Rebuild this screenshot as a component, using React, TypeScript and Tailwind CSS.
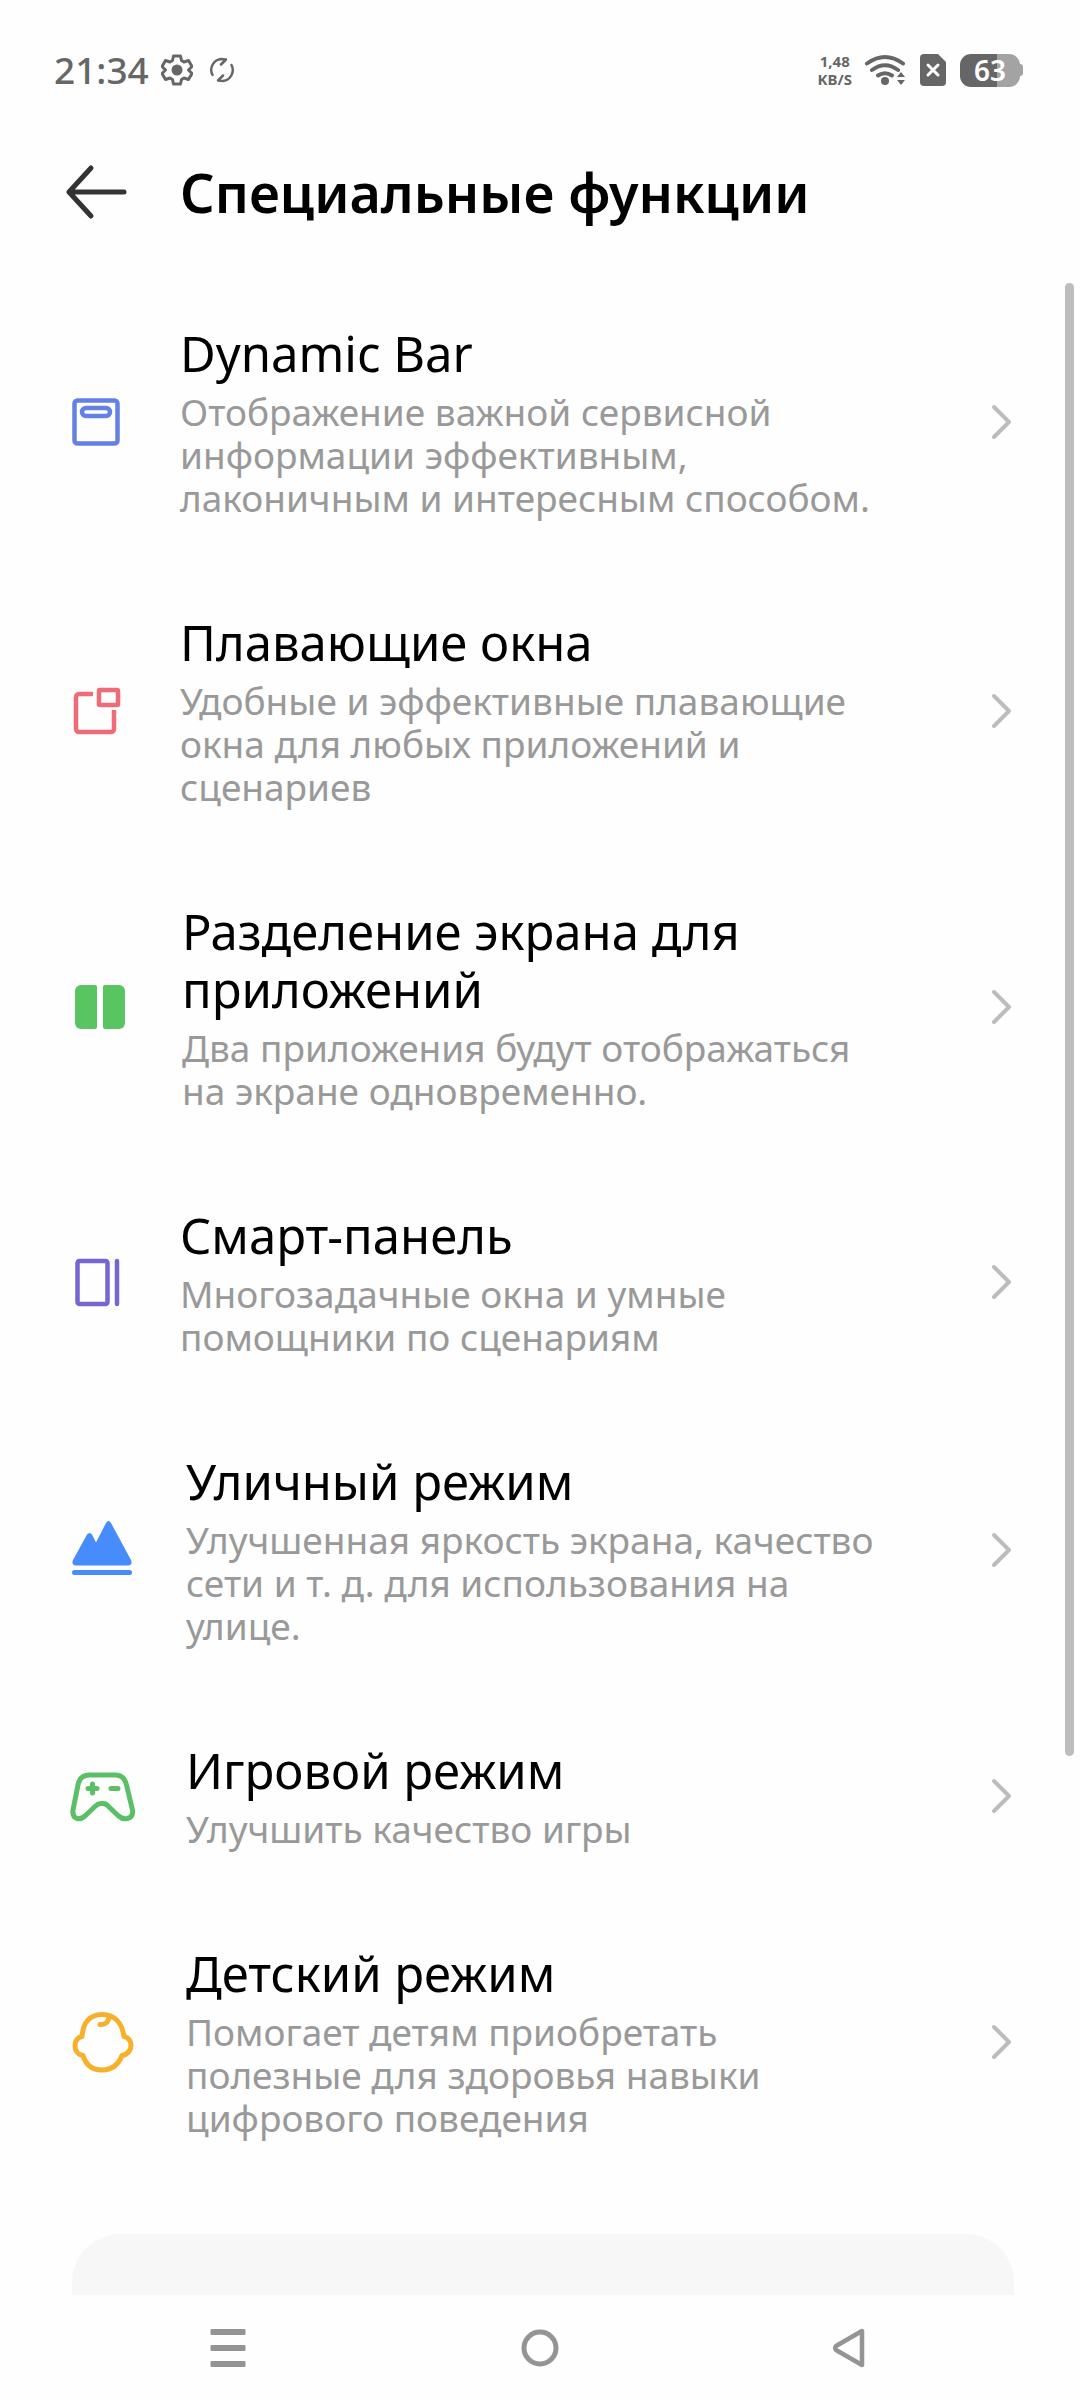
import React from 'react';
import { clsx } from 'clsx';

interface Feature {
  id: string;
  title: string;
  description: string;
  icon: React.ReactNode;
  iconBox: string;
}

const features: Feature[] = [
  {
    id: 'dynamic-bar',
    title: 'Dynamic Bar',
    description: 'Отображение важной сервисной информации эффективным, лаконичным и интересным способом.',
    iconBox: 'w-[114px]',
    icon: (
      <g fill="none" stroke="#6480e6" strokeWidth="4.5">
        <rect x="8.5" y="14.5" width="43" height="43" rx="3" />
        <rect x="16" y="22" width="28" height="8" rx="4" />
      </g>
    ),
  },
  {
    id: 'floating-windows',
    title: 'Плавающие окна',
    description: 'Удобные и эффективные плавающие окна для любых приложений и сценариев',
    iconBox: 'w-[114px]',
    icon: (
      <g fill="none" stroke="#f06b78" strokeWidth="4.5">
        <path d="M27 19H13a3 3 0 0 0-3 3v32a3 3 0 0 0 3 3h32a3 3 0 0 0 3-3V35" />
        <rect x="33" y="15" width="19" height="15" rx="1" />
      </g>
    ),
  },
  {
    id: 'split-screen',
    title: 'Разделение экрана для приложений',
    description: 'Два приложения будут отображаться на экране одновременно.',
    iconBox: 'w-[116px]',
    icon: (
      <g fill="#59c561">
        <path d="M15 14h14a2 2 0 0 1 2 2v40a2 2 0 0 1-2 2H15a6 6 0 0 1-6-6V20a6 6 0 0 1 6-6z" />
        <path d="M39 14h14a6 6 0 0 1 6 6v32a6 6 0 0 1-6 6H39a2 2 0 0 1-2-2V16a2 2 0 0 1 2-2z" />
      </g>
    ),
  },
  {
    id: 'smart-panel',
    title: 'Смарт-панель',
    description: 'Многозадачные окна и умные помощники по сценариям',
    iconBox: 'w-[114px]',
    icon: (
      <g fill="none" stroke="#7566d0" strokeWidth="4.5" strokeLinecap="round">
        <rect x="11.5" y="15" width="30" height="43" rx="2" />
        <path d="M51 15v43" />
      </g>
    ),
  },
  {
    id: 'outdoor-mode',
    title: 'Уличный режим',
    description: 'Улучшенная яркость экрана, качество сети и т. д. для использования на улице.',
    iconBox: 'w-[120px]',
    icon: (
      <g fill="#468cfc">
        <path d="M7 46 21 20.5q2.500-3 5 0l4 8L40 9q2.500-4 5 0l20 37q2 5-3 5.500H10q-5-.5-3-5.500z" />
        <rect x="6" y="56" width="60" height="5" rx="2.500" />
      </g>
    ),
  },
  {
    id: 'game-mode',
    title: 'Игровой режим',
    description: 'Улучшить качество игры',
    iconBox: 'w-[120px]',
    icon: (
      <g fill="none" stroke="#5bc065" strokeWidth="5" strokeLinecap="round" strokeLinejoin="round">
        <path d="M23 15h27q8 0 10.500 10l6 25q1 7-5 8.500-5 1-9-2.500L42 46q-2-2.500-5-2.500h-2q-3 0-5.500 2.500L19 56q-4 3.500-8 2.500-5-2-4-8.500l5-25q2-10 11-10z" />
        <path d="M22 28.500h9M26.500 24v9M45 28.500h7" />
      </g>
    ),
  },
  {
    id: 'kids-mode',
    title: 'Детский режим',
    description: 'Помогает детям приобретать полезные для здоровья навыки цифрового поведения',
    iconBox: 'w-[120px]',
    icon: (
      <g fill="none" stroke="#f6b02c" strokeWidth="5" strokeLinecap="round" strokeLinejoin="round">
        <path d="M36 8.500c12 0 20 8 22 22 5 1 7 5 7 9s-3 9-9 10c-4 10-11 14.500-20 14.500S20 59.500 17 49.500c-6-1-8-6-8-10s2-8 7-9c1-14 8-22 20-22z" />
        <path d="M43 11c-.5 5-4 8-9 7.500" />
      </g>
    ),
  },
];

const StatusBar: React.FC = () => (
  <header className="flex h-[140px] items-center justify-between pr-[57px] pl-[54px] text-[#666666]">
    <div className="flex items-center">
      <span className="text-[37px] leading-[48px] font-medium">21:34</span>
      <svg className="ml-3 h-8 w-8" viewBox="0 0 32 32" fill="none" stroke="currentColor" strokeWidth="3" strokeLinejoin="round">
        <path d="M12.500 2h7l1 4.500 2.500 1.500 4.500-1.500L31 12.500 27.500 16l3.500 3.500-3.500 6L23 24l-2.500 1.500-1 4.500h-7l-1-4.500L9 24l-4.500 1.500-3.500-6L4.500 16 1 12.500l3.500-6L9 8l2.500-1.500z" />
        <circle cx="16" cy="16" r="5.500" fill="currentColor" stroke="none" />
      </svg>
      <svg className="ml-4 h-[26px] w-[26px]" viewBox="0 0 26 26" fill="none" stroke="currentColor" strokeWidth="2.500" strokeLinecap="round" strokeLinejoin="round">
        <path d="M3.500 18A11 11 0 0 1 12 2l5 .5-5 5M22.500 8A11 11 0 0 1 14 24l-5-.5 5-5" />
      </svg>
    </div>
    <div className="flex items-center">
      <div className="text-center text-[15px] leading-[18px] font-bold">
        <div>1,48</div>
        <div>KB/S</div>
      </div>
      <svg className="ml-3 h-8 w-[42px]" viewBox="0 0 42 32" fill="none" stroke="currentColor" strokeWidth="4" strokeLinecap="round">
        <path d="M3 9.500q18-13 36 0M8 16q13-9.500 26 0M14 21.500q7-4.500 14 0" />
        <circle cx="21" cy="27" r="4" fill="currentColor" stroke="none" />
        <path d="m37 18 4 5h-8zM37 31l4-5h-8z" fill="currentColor" stroke="none" />
      </svg>
      <svg className="ml-3.5 h-8 w-[26px]" viewBox="0 0 26 32">
        <path d="M4 0h14l8 8v20a4 4 0 0 1-4 4H4a4 4 0 0 1-4-4V4a4 4 0 0 1 4-4z" fill="currentColor" />
        <path d="m8 11 10 10M18 11 8 21" stroke="#fff" strokeWidth="3" strokeLinecap="round" />
      </svg>
      <div className="ml-3.5 flex items-center">
        <div className="flex h-[33px] w-[60px] items-center justify-center rounded-[11px] bg-linear-to-r from-[#666666] from-62% to-[#a3a3a3] to-62% text-[28px] leading-[33px] font-semibold text-white">
          63
        </div>
        <div className="h-3 w-[3px] rounded-r bg-[#a3a3a3]" />
      </div>
    </div>
  </header>
);

const FeatureRow: React.FC<{ feature: Feature }> = ({ feature }) => (
  <li>
    <a href={`#${feature.id}`} className="flex items-center px-[66px] py-[47px]">
      <span className={clsx('shrink-0', feature.iconBox)}>
        <svg className="h-[72px] w-[72px]" viewBox="0 0 72 72" aria-hidden="true">
          {feature.icon}
        </svg>
      </span>
      <span className="flex flex-1 flex-col gap-2 pr-24">
        <span className="text-[49px] leading-[58px] text-black">{feature.title}</span>
        <span className="text-[37px] leading-[43px] text-[#999999]">{feature.description}</span>
      </span>
      <svg className="h-10 w-6 shrink-0" viewBox="0 0 24 40" fill="none" stroke="#bcbcbc" strokeWidth="4" strokeLinecap="round" strokeLinejoin="round" aria-hidden="true">
        <path d="m4 5 15 15L4 35" />
      </svg>
    </a>
  </li>
);

const App: React.FC = () => {
  return (
    <div className="flex min-h-screen flex-col bg-[#fefefe] font-['Noto_Sans',sans-serif]">
      <StatusBar />

      {/* Title bar */}
      <div className="flex h-[104px] items-center pl-[64px]">
        <button type="button" aria-label="Назад" className="w-[116px]">
          <svg className="h-[56px] w-[64px]" viewBox="0 0 64 56" fill="none" stroke="#333333" strokeWidth="5" strokeLinecap="round" strokeLinejoin="round">
            <path d="M60 28H5M27 4 5 28l22 24" />
          </svg>
        </button>
        <h1 className="text-[54px] leading-[64px] font-semibold text-black">Специальные функции</h1>
      </div>

      <main className="relative mt-[33px] flex flex-1 flex-col">
        <ul>
          {features.map((feature) => (
            <FeatureRow key={feature.id} feature={feature} />
          ))}
        </ul>
        <section className="mt-12 mr-[66px] ml-[72px] min-h-[60px] flex-1 rounded-t-[48px] bg-[#f7f7f7]" />
        {/* Scroll thumb */}
        <div className="absolute top-1.5 right-1.5 h-[73%] w-[9px] rounded-full bg-[#bdbdbd]" />
      </main>

      {/* System navigation */}
      <nav className="grid h-[105px] grid-cols-3 items-center px-[72px] text-[#949494]">
        <button type="button" aria-label="Недавние" className="flex justify-center">
          <svg className="h-10 w-10" viewBox="0 0 40 40" fill="currentColor">
            <rect x="2.500" y="1" width="35" height="6" rx="1" />
            <rect x="2.500" y="17" width="35" height="6" rx="1" />
            <rect x="2.500" y="33" width="35" height="6" rx="1" />
          </svg>
        </button>
        <button type="button" aria-label="Домой" className="flex justify-center">
          <svg className="h-10 w-10" viewBox="0 0 40 40" fill="none" stroke="currentColor" strokeWidth="5">
            <circle cx="20" cy="20" r="16" />
          </svg>
        </button>
        <button type="button" aria-label="Назад" className="flex justify-center">
          <svg className="h-10 w-10" viewBox="0 0 40 40" fill="none" stroke="currentColor" strokeWidth="4.500" strokeLinejoin="round">
            <path d="M30 3v34L4 22q-1.500-2 0-4z" />
          </svg>
        </button>
      </nav>
    </div>
  );
};

export default App;
